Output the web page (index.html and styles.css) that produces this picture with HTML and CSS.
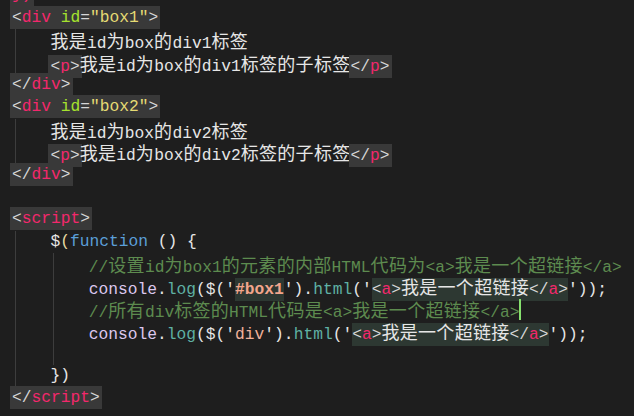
FILE: index.html
```html
<!DOCTYPE html>
<html lang="zh">
<head>
<meta charset="utf-8">
<title>editor</title>
<link rel="stylesheet" href="styles.css">
</head>
<body>
<div class="code">
<div class="ln"><span class="tag"><span class="tn">})</span></span></div>
<div class="ln"><span class="tag"><span class="p">&lt;</span><span class="tn">div</span> <span class="at">id</span><span class="p">=</span><span class="sv">"box1"</span><span class="p">&gt;</span></span></div>
<div class="ln"><span class="ind"></span><span class="cn">我是</span>id<span class="cn">为</span>box<span class="cn">的</span>div1<span class="cn">标签</span></div>
<div class="ln"><span class="ind"></span><span class="tag"><span class="p">&lt;</span><span class="tn">p</span><span class="p">&gt;</span></span><span class="cn">我是</span>id<span class="cn">为</span>box<span class="cn">的</span>div1<span class="cn">标签的子标签</span><span class="tag"><span class="p">&lt;/</span><span class="tn">p</span><span class="p">&gt;</span></span></div>
<div class="ln"><span class="tag"><span class="p">&lt;/</span><span class="tn">div</span><span class="p">&gt;</span></span></div>
<div class="ln"><span class="tag"><span class="p">&lt;</span><span class="tn">div</span> <span class="at">id</span><span class="p">=</span><span class="sv">"box2"</span><span class="p">&gt;</span></span></div>
<div class="ln"><span class="ind"></span><span class="cn">我是</span>id<span class="cn">为</span>box<span class="cn">的</span>div2<span class="cn">标签</span></div>
<div class="ln"><span class="ind"></span><span class="tag"><span class="p">&lt;</span><span class="tn">p</span><span class="p">&gt;</span></span><span class="cn">我是</span>id<span class="cn">为</span>box<span class="cn">的</span>div2<span class="cn">标签的子标签</span><span class="tag"><span class="p">&lt;/</span><span class="tn">p</span><span class="p">&gt;</span></span></div>
<div class="ln"><span class="tag"><span class="p">&lt;/</span><span class="tn">div</span><span class="p">&gt;</span></span></div>
<div class="ln"></div>
<div class="ln"><span class="tag"><span class="p">&lt;</span><span class="tn">script</span><span class="p">&gt;</span></span></div>
<div class="ln"><span class="ind"></span>$<span class="par">(</span><span class="kw">function</span> () {</div>
<div class="ln"><span class="ind"></span><span class="ind"></span><span class="cm">//<span class="cn">设置</span>id<span class="cn">为</span>box1<span class="cn">的元素的内部</span>HTML<span class="cn">代码为</span>&lt;a&gt;<span class="cn">我是一个超链接</span>&lt;/a&gt;</span></div>
<div class="ln"><span class="ind"></span><span class="ind"></span><span class="obj">console</span>.<span class="fn">log</span>($('<span class="hl"><span class="str">#box1</span></span>').<span class="fn">html</span>('<span class="hl"><span class="p">&lt;</span><span class="tn">a</span><span class="p">&gt;</span><span class="cn">我是一个超链接</span><span class="p">&lt;/</span><span class="tn">a</span><span class="p">&gt;</span></span>'));</div>
<div class="ln"><span class="ind"></span><span class="ind"></span><span class="cm">//<span class="cn">所有</span>div<span class="cn">标签的</span>HTML<span class="cn">代码是</span>&lt;a&gt;<span class="cn">我是一个超链接</span>&lt;/a&gt;</span><span class="caret"></span></div>
<div class="ln"><span class="ind"></span><span class="ind"></span><span class="obj">console</span>.<span class="fn">log</span>($('<span class="str2">div</span>').<span class="fn">html</span>('<span class="hl"><span class="p">&lt;</span><span class="tn">a</span><span class="p">&gt;</span><span class="cn">我是一个超链接</span><span class="p">&lt;/</span><span class="tn">a</span><span class="p">&gt;</span></span>'));</div>
<div class="ln"><span class="ind"></span><span class="ind"></span></div>
<div class="ln"><span class="ind"></span>})</div>
<div class="ln"><span class="tag"><span class="p">&lt;/</span><span class="tn">script</span><span class="p">&gt;</span></span></div>
</div>
</body>
</html>
```
FILE: styles.css
```css
html, body {
  margin: 0;
  padding: 0;
  background: #1e1e1e;
  overflow: hidden;
}

.code {
  margin-top: -15.6px;
  padding-left: 12px;
  font-family: "Liberation Mono", "Noto Sans CJK SC", monospace;
  font-size: 16.25px;
  line-height: 22.4px;
  color: #e6e6e6;
}

.ln {
  height: 22.4px;
  white-space: pre;
}

.tag {
  padding: 2px 2px;
  margin: 0 -2px;
  background: #393939;
}

.ind {
  display: inline-block;
  width: 38.4px;
  height: 22.4px;
  vertical-align: top;
  background: linear-gradient(to right, transparent 3px, #3d3d3d 3px, #3d3d3d 4px, transparent 4px);
}

.cn {
  font-family: "Noto Sans CJK SC", sans-serif;
  font-size: 18px;
  letter-spacing: 0.3px;
}

.p { color: #d6d6d6; }
.tn { color: #f2286c; }
.at { color: #a6e22e; }
.sv { color: #e6db74; }
.kw { color: #5b9fd8; }
.par { color: #e8dca4; }
.cm { color: #5d8b4f; }
.obj { color: #dcc8ee; }
.fn { color: #5fb1a4; }
.str { color: #f3a68c; font-weight: bold; }
.str2 { color: #efb09a; }

.hl {
  padding: 2px 0;
  background: #2d3832;
}

.caret {
  display: inline-block;
  width: 2px;
  height: 21px;
  vertical-align: top;
  margin-top: 1px;
  background: #86e06e;
}
```
